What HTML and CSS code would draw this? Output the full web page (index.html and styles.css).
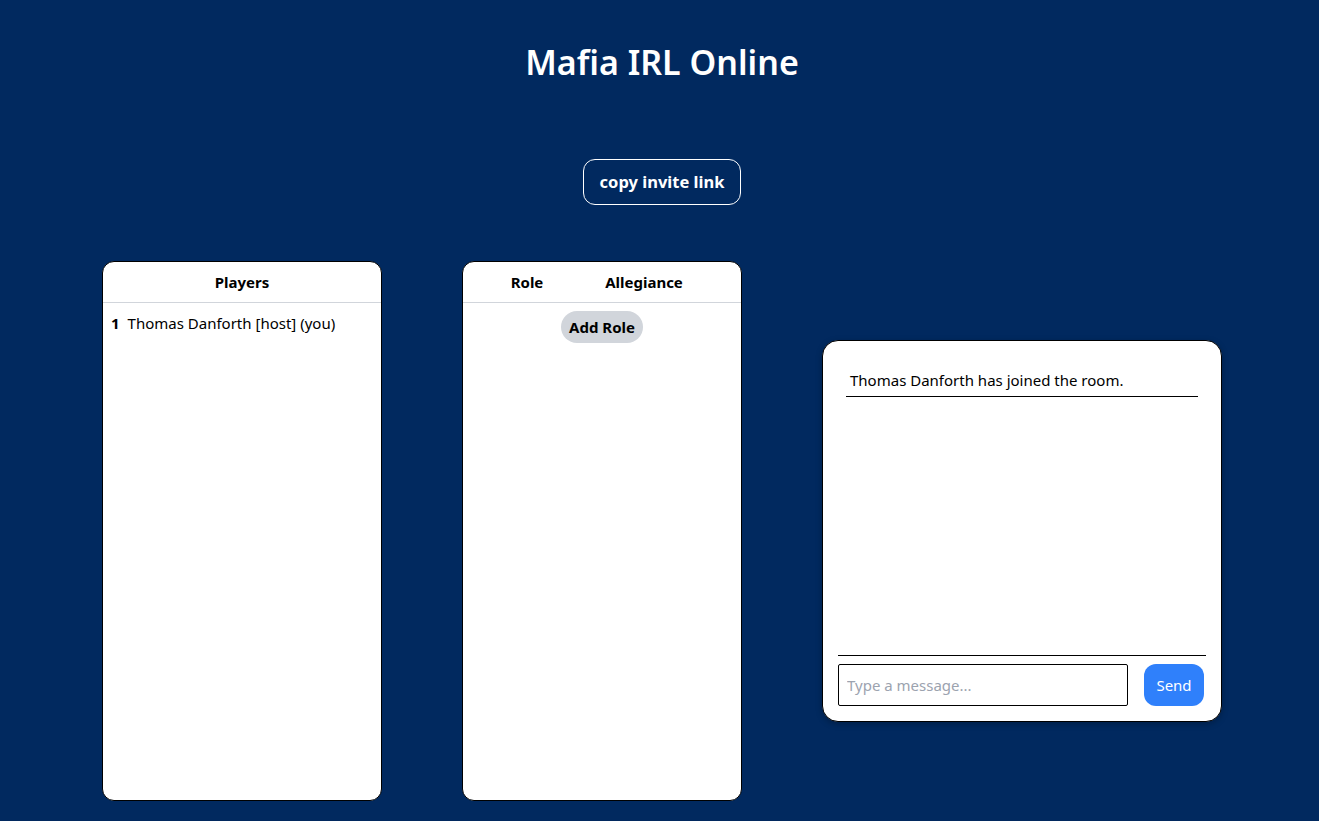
FILE: index.html
```html
<!DOCTYPE html>
<html lang="en">
<head>
<meta charset="utf-8">
<title>Mafia IRL Online</title>
<link rel="stylesheet" href="styles.css">
</head>
<body>
<main class="page">
  <h1 class="title">Mafia IRL Online</h1>
  <button class="invite">copy invite link</button>
  <section class="boards">
    <div class="card">
      <div class="card-head"><span>Players</span></div>
      <ul class="players">
        <li><span class="num">1</span><span>Thomas Danforth [host] (you)</span></li>
      </ul>
    </div>
    <div class="card">
      <div class="card-head roles-head"><span>Role</span><span>Allegiance</span></div>
      <div class="roles-body">
        <button class="add-role">Add Role</button>
      </div>
    </div>
    <div class="chat">
      <div class="messages">
        <div class="msg">Thomas Danforth has joined the room.</div>
      </div>
      <form class="composer">
        <input class="msg-input" type="text" placeholder="Type a message...">
        <button class="send" type="button">Send</button>
      </form>
    </div>
  </section>
</main>
</body>
</html>
```
FILE: styles.css
```css
* { box-sizing: border-box; }
html, body { margin: 0; padding: 0; }
body {
  background: #01295f;
  font-family: "Noto Sans", "Open Sans", sans-serif;
  color: #000;
  height: 821px;
  overflow: hidden;
}
.page {
  display: flex;
  flex-direction: column;
  align-items: center;
  padding-top: 42px;
  padding-left: 5px;
}
.title {
  margin: 0;
  font-size: 34px;
  line-height: 40px;
  font-weight: 600;
  color: #fff;
}
.invite {
  margin-top: 77px;
  font-family: inherit;
  font-size: 16.5px;
  line-height: 28px;
  font-weight: 700;
  color: #fff;
  background: transparent;
  border: 1px solid #fff;
  border-radius: 12px;
  padding: 8px 16px;
}
.boards {
  margin-top: 56px;
  display: flex;
  align-items: center;
  justify-content: center;
  gap: 80px;
  align-self: stretch;
}
.card {
  width: 280px;
  height: 540px;
  background: #fff;
  border: 1px solid #000;
  border-radius: 12px;
  display: flex;
  flex-direction: column;
}
.card-head {
  height: 41px;
  border-bottom: 1px solid #d1d5db;
  display: flex;
  align-items: center;
  justify-content: center;
  font-weight: 700;
  font-size: 15px;
}
.roles-head {
  display: grid;
  grid-template-columns: 128px 106px;
  justify-content: start;
  justify-items: center;
}
.players {
  list-style: none;
  margin: 0;
  padding: 8px 8px;
  font-size: 15px;
  line-height: 24px;
}
.players li { display: flex; gap: 8px; }
.num { font-weight: 700; }
.roles-body {
  display: flex;
  justify-content: center;
  padding-top: 8px;
}
.add-role {
  font-family: inherit;
  font-size: 15px;
  line-height: 24px;
  font-weight: 700;
  color: #000;
  background: #d1d5db;
  border: none;
  border-radius: 9999px;
  padding: 4px 8px;
}
.chat {
  width: 400px;
  height: 382px;
  background: #fff;
  border: 1px solid #000;
  border-radius: 16px;
  padding: 15px;
  display: flex;
  flex-direction: column;
  box-shadow: 0 2px 6px rgba(0,0,0,0.25);
}
.messages {
  flex: 1;
  padding: 8px;
}
.msg {
  padding: 4px;
  font-size: 15px;
  line-height: 24px;
  border-bottom: 1px solid #000;
}
.composer {
  margin: 0;
  border-top: 1px solid #000;
  padding-top: 8px;
  display: flex;
  gap: 16px;
}
.msg-input {
  width: 290px;
  height: 42px;
  border: 1px solid #000;
  border-radius: 2px;
  padding: 0 8px;
  font-family: inherit;
  font-size: 15px;
}
.msg-input::placeholder { color: #9ca3af; }
.send {
  width: 60px;
  height: 42px;
  border: none;
  border-radius: 12px;
  background: #2f80fb;
  color: #fff;
  font-family: inherit;
  font-size: 15px;
}
```
